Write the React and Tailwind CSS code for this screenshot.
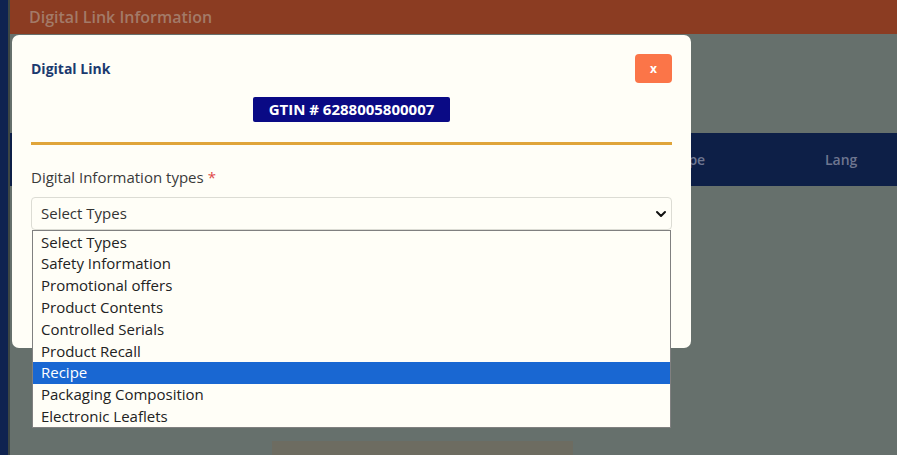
import React from 'react';

const options = [
  'Select Types',
  'Safety Information',
  'Promotional offers',
  'Product Contents',
  'Controlled Serials',
  'Product Recall',
  'Recipe',
  'Packaging Composition',
  'Electronic Leaflets',
];

export default function App() {
  const selected = 'Recipe';

  return (
    <div
      className="relative w-[897px] h-[455px] overflow-hidden flex bg-[#66706c]"
      style={{ fontFamily: '"Open Sans", "Noto Sans", sans-serif' }}
    >
      {/* sidebar edge */}
      <div className="w-[8px] h-full bg-[#0f2350]" />
      <div className="w-[2px] h-full bg-[#3d4744]" />

      {/* page behind the backdrop */}
      <div className="flex-1 flex flex-col">
        <div className="h-[34px] bg-[#8b3c22] flex items-center pl-[19px] text-[16px] font-semibold text-[#a37a68]">
          Digital Link Information
        </div>
        <div className="h-[99px]" />
        <div className="h-[53px] bg-[#0d1f47] flex items-center text-[14px] font-semibold text-[#6e7690]">
          <div className="w-[663px]" />
          <div className="w-[152px]">Type</div>
          <div>Lang</div>
        </div>
        <div className="flex-1" />
        <div className="h-[14px] flex">
          <div className="w-[262px]" />
          <div className="w-[301px] bg-[#6d6c61]" />
        </div>
      </div>

      {/* modal */}
      <div className="absolute left-[12px] top-[35px] w-[679px] h-[313px] rounded-[7px] bg-[#fffef7] px-[19px] pt-[19px]">
        <div className="flex items-center justify-between">
          <div className="text-[14px] font-bold text-[#1b3a6f]">Digital Link</div>
          <button className="w-[37px] h-[29px] rounded-[4px] bg-[#fb7548] text-white text-[12px] font-bold flex items-center justify-center">
            x
          </button>
        </div>
        <div className="flex justify-center mt-[14px]">
          <div className="w-[197px] h-[25px] rounded-[2px] bg-[#0a0a85] text-white text-[15px] font-bold flex items-center justify-center">
            GTIN # 6288005800007
          </div>
        </div>
        <div className="mt-[20px] h-[3px] bg-[#e0a53a]" />
        <div className="mt-[22px] h-[20px] text-[15px] text-[#3a3a3a] flex items-center">
          Digital Information types <span className="ml-[4px] text-[#e04848]">*</span>
        </div>
        <div className="mt-[10px] h-[33px] rounded-[4px] border border-[#dcdcd4] flex items-center justify-between pl-[9px] pr-[4px] text-[15px] text-[#333]">
          <span>Select Types</span>
          <svg width="12" height="12" viewBox="0 0 12 12" fill="none">
            <path d="M2 4l4 4 4-4" stroke="#111" strokeWidth="2" strokeLinecap="round" strokeLinejoin="round" />
          </svg>
        </div>
      </div>

      {/* open dropdown list */}
      <div className="absolute left-[32px] top-[230px] w-[639px] border border-[#808080] bg-[#fffef7] text-[15px] text-[#222]">
        {options.map((o) => (
          <div
            key={o}
            className={
              'h-[21.8px] flex items-center pl-[8px] ' +
              (o === selected ? 'bg-[#1967d2] text-white' : '')
            }
          >
            {o}
          </div>
        ))}
      </div>
    </div>
  );
}
